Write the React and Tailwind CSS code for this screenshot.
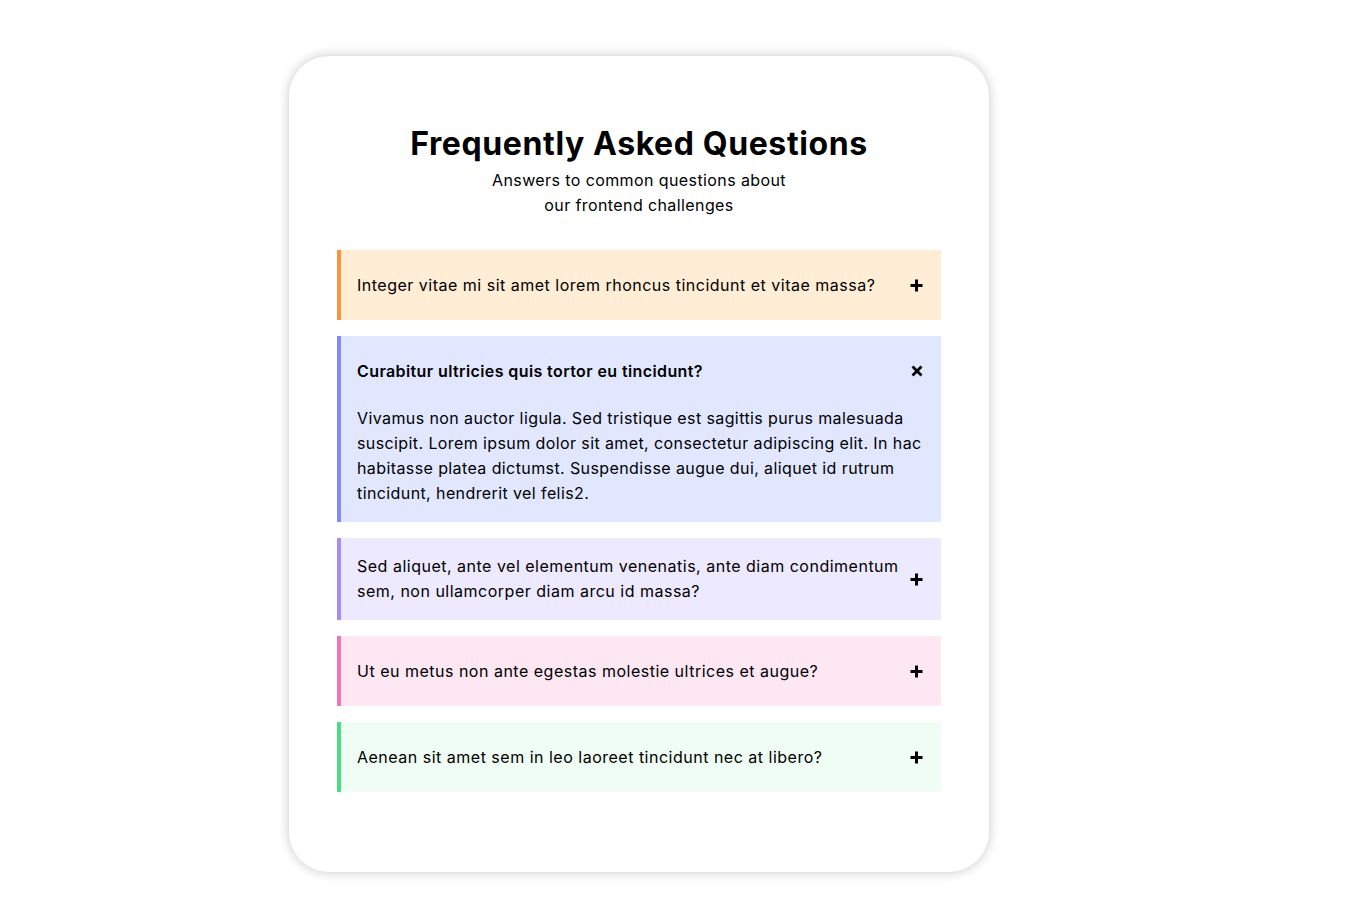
import React from "react";

function PlusIcon() {
  return (
    <svg width="13" height="13" viewBox="0 0 13 13" className="shrink-0">
      <path d="M6.5 0.5 V12.5 M0.5 6.5 H12.5" stroke="#000" strokeWidth="3" fill="none" />
    </svg>
  );
}

function XIcon() {
  return (
    <svg width="12" height="12" viewBox="0 0 12 12" className="shrink-0">
      <path d="M1.5 1.5 L10.5 10.5 M10.5 1.5 L1.5 10.5" stroke="#000" strokeWidth="2.8" fill="none" />
    </svg>
  );
}

const items = [
  {
    q: ["Integer vitae mi sit amet lorem rhoncus tincidunt et vitae massa?"],
    bg: "bg-[#ffedd5]",
    border: "border-[#fb923c]",
  },
  {
    q: ["Curabitur ultricies quis tortor eu tincidunt?"],
    bg: "bg-[#e0e7ff]",
    border: "border-[#818cf8]",
    open: true,
    a: [
      "Vivamus non auctor ligula. Sed tristique est sagittis purus malesuada",
      "suscipit. Lorem ipsum dolor sit amet, consectetur adipiscing elit. In hac",
      "habitasse platea dictumst. Suspendisse augue dui, aliquet id rutrum",
      "tincidunt, hendrerit vel felis2.",
    ],
  },
  {
    q: [
      "Sed aliquet, ante vel elementum venenatis, ante diam condimentum",
      "sem, non ullamcorper diam arcu id massa?",
    ],
    bg: "bg-[#ede9fe]",
    border: "border-[#a78bfa]",
  },
  {
    q: ["Ut eu metus non ante egestas molestie ultrices et augue?"],
    bg: "bg-[#fce7f3]",
    border: "border-[#f472b6]",
  },
  {
    q: ["Aenean sit amet sem in leo laoreet tincidunt nec at libero?"],
    bg: "bg-[#f0fdf4]",
    border: "border-[#4ade80]",
  },
];

export default function App() {
  return (
    <div className="min-h-[923px] bg-white font-[Inter,sans-serif] text-black pt-[56px] pl-[289px] pb-[51px]">
      <div className="w-[700px] h-[816px] rounded-[40px] bg-white shadow-[0_0_12px_rgba(0,0,0,0.22)] px-12 pt-[68px]">
        <h1 className="text-center text-[32px] leading-[40px] font-bold tracking-[0.6px]">
          Frequently Asked Questions
        </h1>
        <p className="mt-1 text-center text-[16px] leading-[25px] tracking-[0.4px]">
          Answers to common questions about
          <br />
          our frontend challenges
        </p>
        <div className="mt-8 flex flex-col gap-4">
          {items.map((it, i) => (
            <div key={i} className={`border-l-4 ${it.border} ${it.bg} pl-4 pr-[18px] py-4`}>
              <div className="flex items-center justify-between min-h-[38px] gap-1">
                <div
                  className={`text-[16px] leading-[25px] ${
                    it.open ? "font-semibold tracking-[0.4px]" : "tracking-[0.5px]"
                  }`}
                >
                  {it.q.map((l, j) => (
                    <span key={j} className="block whitespace-nowrap">
                      {l}
                    </span>
                  ))}
                </div>
                {it.open ? <XIcon /> : <PlusIcon />}
              </div>
              {it.a && (
                <div className="mt-4 text-[16px] leading-[25px] tracking-[0.4px]">
                  {it.a.map((l, j) => (
                    <span key={j} className="block whitespace-nowrap">
                      {l}
                    </span>
                  ))}
                </div>
              )}
            </div>
          ))}
        </div>
      </div>
    </div>
  );
}
